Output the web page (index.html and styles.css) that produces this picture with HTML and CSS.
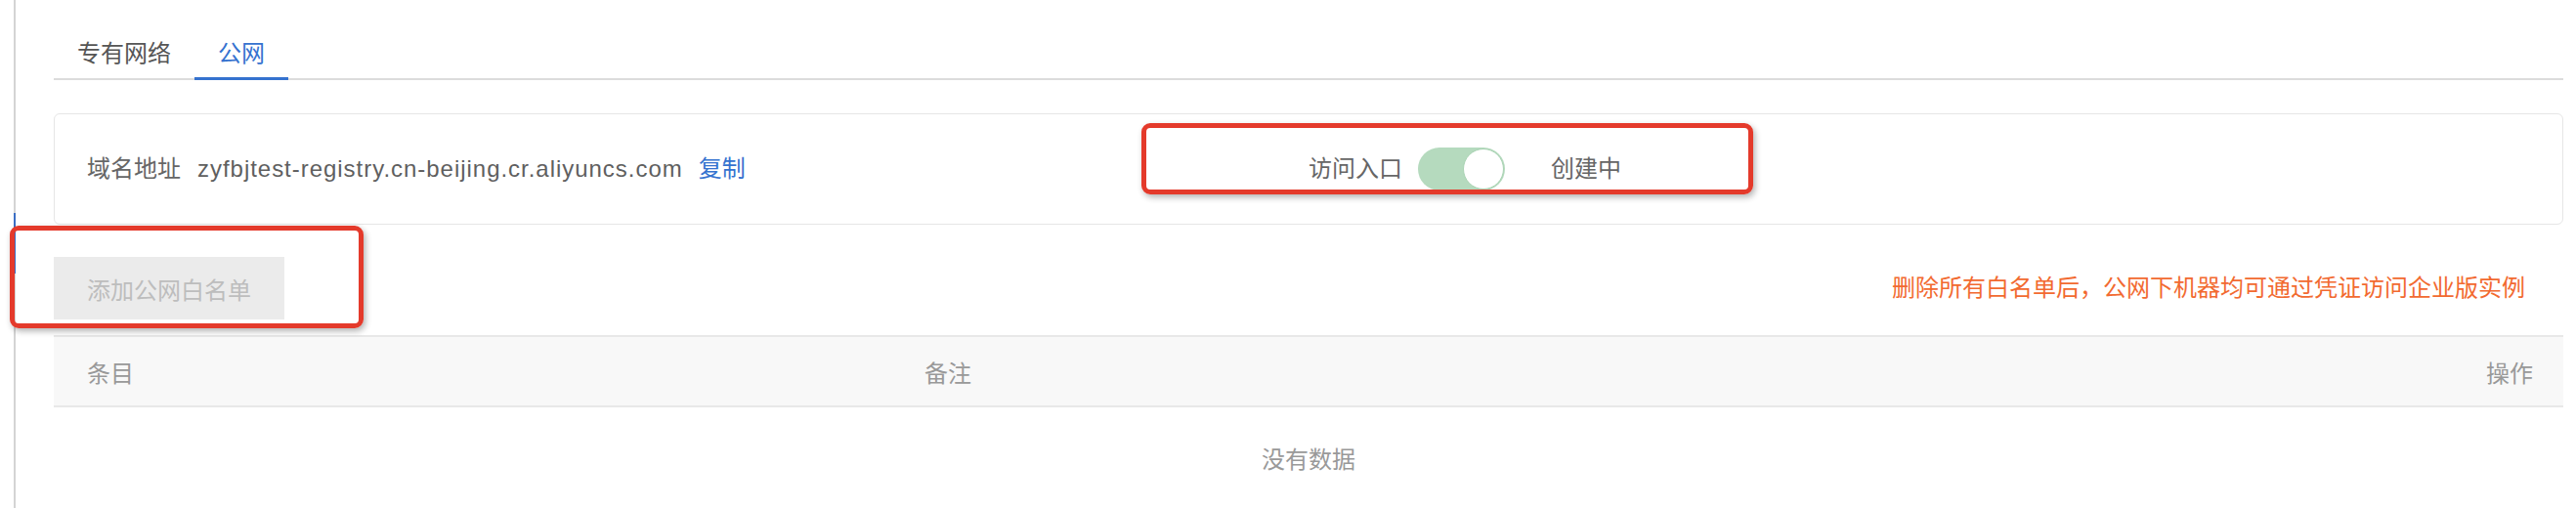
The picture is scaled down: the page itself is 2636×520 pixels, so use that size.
FILE: index.html
```html
<!DOCTYPE html>
<html lang="zh-CN">
<head>
<meta charset="utf-8">
<title>公网</title>
<link rel="stylesheet" href="styles.css">
</head>
<body>
<div class="page">
  <nav class="tabs">
    <a class="tab">专有网络</a>
    <a class="tab active">公网</a>
  </nav>

  <section class="card">
    <div class="field">
      <span class="label">域名地址</span>
      <span class="domain">zyfbjtest-registry.cn-beijing.cr.aliyuncs.com</span>
      <a class="link">复制</a>
    </div>
    <div class="field access">
      <span class="label">访问入口</span>
      <span class="switch"><span class="knob"></span></span>
      <span class="status">创建中</span>
    </div>
  </section>

  <div class="toolbar">
    <button class="btn-disabled" disabled>添加公网白名单</button>
    <span class="tip">删除所有白名单后，公网下机器均可通过凭证访问企业版实例</span>
  </div>

  <div class="table">
    <div class="thead">
      <span>条目</span>
      <span>备注</span>
      <span>操作</span>
    </div>
    <div class="empty">没有数据</div>
  </div>

  <div class="mark mark-entry"></div>
  <div class="mark mark-add"></div>
</div>
</body>
</html>
```
FILE: styles.css
```css
* { box-sizing: border-box; }

html, body {
  margin: 0;
  background: #ffffff;
}

body {
  font-family: "Liberation Sans", "Noto Sans CJK SC", sans-serif;
  font-size: 24px;
  color: #666;
}

.page {
  position: relative;
  margin-left: 14px;
  border-left: 2px solid #d4d4d4;
  height: 520px;
  padding: 0 13px 0 39px;
}

.page::before {
  content: "";
  position: absolute;
  left: -2px;
  top: 218px;
  width: 2px;
  height: 62px;
  background: #3b6fc4;
}

/* tabs */
.tabs {
  display: flex;
  padding-top: 38px;
  border-bottom: 2px solid #dcdcdc;
}

.tab {
  position: relative;
  padding: 0 24px 8px;
  line-height: 34px;
  color: #555;
}

.tab.active {
  color: #3572cf;
}

.tab.active::after {
  content: "";
  position: absolute;
  left: 0;
  right: 0;
  bottom: -2px;
  height: 3px;
  background: #3572cf;
}

/* card */
.card {
  margin-top: 34px;
  height: 114px;
  border: 1px solid #e6e6e6;
  border-radius: 6px;
  display: grid;
  grid-template-columns: 1fr 1fr;
  align-items: center;
}

.field {
  display: flex;
  align-items: center;
  line-height: 34px;
}

.field:first-child {
  padding-left: 33px;
}

.domain {
  margin-left: 17px;
  letter-spacing: 0.97px;
  color: #5f5f5f;
}

.link {
  margin-left: 16px;
  color: #3572cf;
}

.switch {
  position: relative;
  margin-left: 16px;
  width: 89px;
  height: 44px;
  border-radius: 22px;
  background: #b5dabe;
}

.knob {
  position: absolute;
  right: 1px;
  top: 1px;
  width: 42px;
  height: 42px;
  border-radius: 50%;
  background: #fff;
  border: 1px solid #a9d3b3;
}

.status {
  margin-left: 47px;
}

/* toolbar */
.toolbar {
  margin-top: 33px;
  display: flex;
  justify-content: space-between;
  align-items: center;
  padding-right: 39px;
}

.btn-disabled {
  height: 64px;
  padding: 0 34px;
  border: none;
  border-radius: 0;
  background: #ebebeb;
  color: #bdbdbd;
  font: inherit;
  font-size: 24px;
}

.tip {
  color: #f26a30;
  margin-top: -6px;
}

/* table */
.table {
  margin-top: 16px;
}

.thead {
  height: 74px;
  display: grid;
  grid-template-columns: 857px 1fr auto;
  align-items: center;
  padding: 0 31px 0 34px;
  background: #f8f8f8;
  border-top: 2px solid #e8e8e8;
  border-bottom: 2px solid #e8e8e8;
  color: #999;
}

.empty {
  height: 103px;
  padding-top: 37px;
  line-height: 34px;
  text-align: center;
  color: #999;
}

/* annotation boxes */
.mark {
  position: absolute;
  border: 5px solid #e43a2b;
  border-radius: 9px;
  box-shadow: 2px 3px 6px rgba(0, 0, 0, 0.3);
}

.mark-entry {
  left: 1152px;
  top: 126px;
  width: 626px;
  height: 73px;
}

.mark-add {
  left: -6px;
  top: 231px;
  width: 362px;
  height: 105px;
}
```
